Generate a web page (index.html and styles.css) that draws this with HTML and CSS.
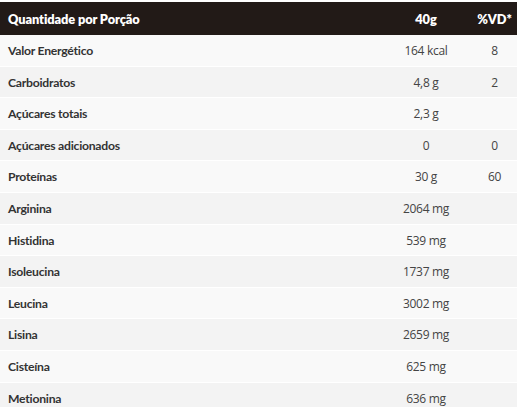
FILE: index.html
```html
<!DOCTYPE html>
<html lang="pt">
<head>
<meta charset="utf-8">
<link rel="stylesheet" href="styles.css">
</head>
<body>
<table class="nutri">
  <thead>
    <tr><th class="name">Quantidade por Porção</th><th class="qty">40g</th><th class="vd">%VD*</th></tr>
  </thead>
  <tbody>
    <tr><td class="name">Valor Energético</td><td class="qty">164 kcal</td><td class="vd">8</td></tr>
    <tr><td class="name">Carboidratos</td><td class="qty">4,8 g</td><td class="vd">2</td></tr>
    <tr><td class="name">Açúcares totais</td><td class="qty">2,3 g</td><td class="vd"></td></tr>
    <tr><td class="name">Açúcares adicionados</td><td class="qty">0</td><td class="vd">0</td></tr>
    <tr><td class="name">Proteínas</td><td class="qty">30 g</td><td class="vd">60</td></tr>
    <tr><td class="name">Arginina</td><td class="qty">2064 mg</td><td class="vd"></td></tr>
    <tr><td class="name">Histidina</td><td class="qty">539 mg</td><td class="vd"></td></tr>
    <tr><td class="name">Isoleucina</td><td class="qty">1737 mg</td><td class="vd"></td></tr>
    <tr><td class="name">Leucina</td><td class="qty">3002 mg</td><td class="vd"></td></tr>
    <tr><td class="name">Lisina</td><td class="qty">2659 mg</td><td class="vd"></td></tr>
    <tr><td class="name">Cisteína</td><td class="qty">625 mg</td><td class="vd"></td></tr>
    <tr><td class="name">Metionina</td><td class="qty">636 mg</td><td class="vd"></td></tr>
  </tbody>
</table>
</body>
</html>
```
FILE: styles.css
```css
html, body {
  margin: 0;
  padding: 0;
  background: #ffffff;
}
body {
  padding-top: 2px;
  font-family: "Open Sans", "Liberation Sans", sans-serif;
}
.nutri {
  width: 517px;
  border-collapse: collapse;
  table-layout: fixed;
  font-size: 12px;
  letter-spacing: -0.3px;
}
.nutri th, .nutri td {
  padding: 7px 8px 5px;
  line-height: 18.6px;
  text-align: left;
}
.nutri thead th {
  background: #221a17;
  color: #ffffff;
  font-family: "Lato", "Open Sans", sans-serif;
  font-weight: 800;
  font-size: 12.8px;
  letter-spacing: -0.1px;
  height: 21px;
  padding: 7px 8px 5px;
}
.nutri .qty {
  width: 92px;
  text-align: center;
  padding-left: 0;
  padding-right: 0;
}
.nutri .vd {
  width: 45px;
  text-align: center;
  padding-left: 0;
  padding-right: 0;
}
.nutri tbody td {
  border-bottom: 1px solid #ffffff;
  color: #444444;
  height: 18.6px;
}
.nutri tbody td.name {
  font-family: "Lato", "Open Sans", sans-serif;
  font-weight: 700;
  font-size: 12.2px;
  letter-spacing: -0.25px;
  color: #333333;
}
.nutri tbody tr:nth-child(odd) td {
  background: #f9f9f9;
}
.nutri tbody tr:nth-child(even) td {
  background: #f3f3f3;
}
```
